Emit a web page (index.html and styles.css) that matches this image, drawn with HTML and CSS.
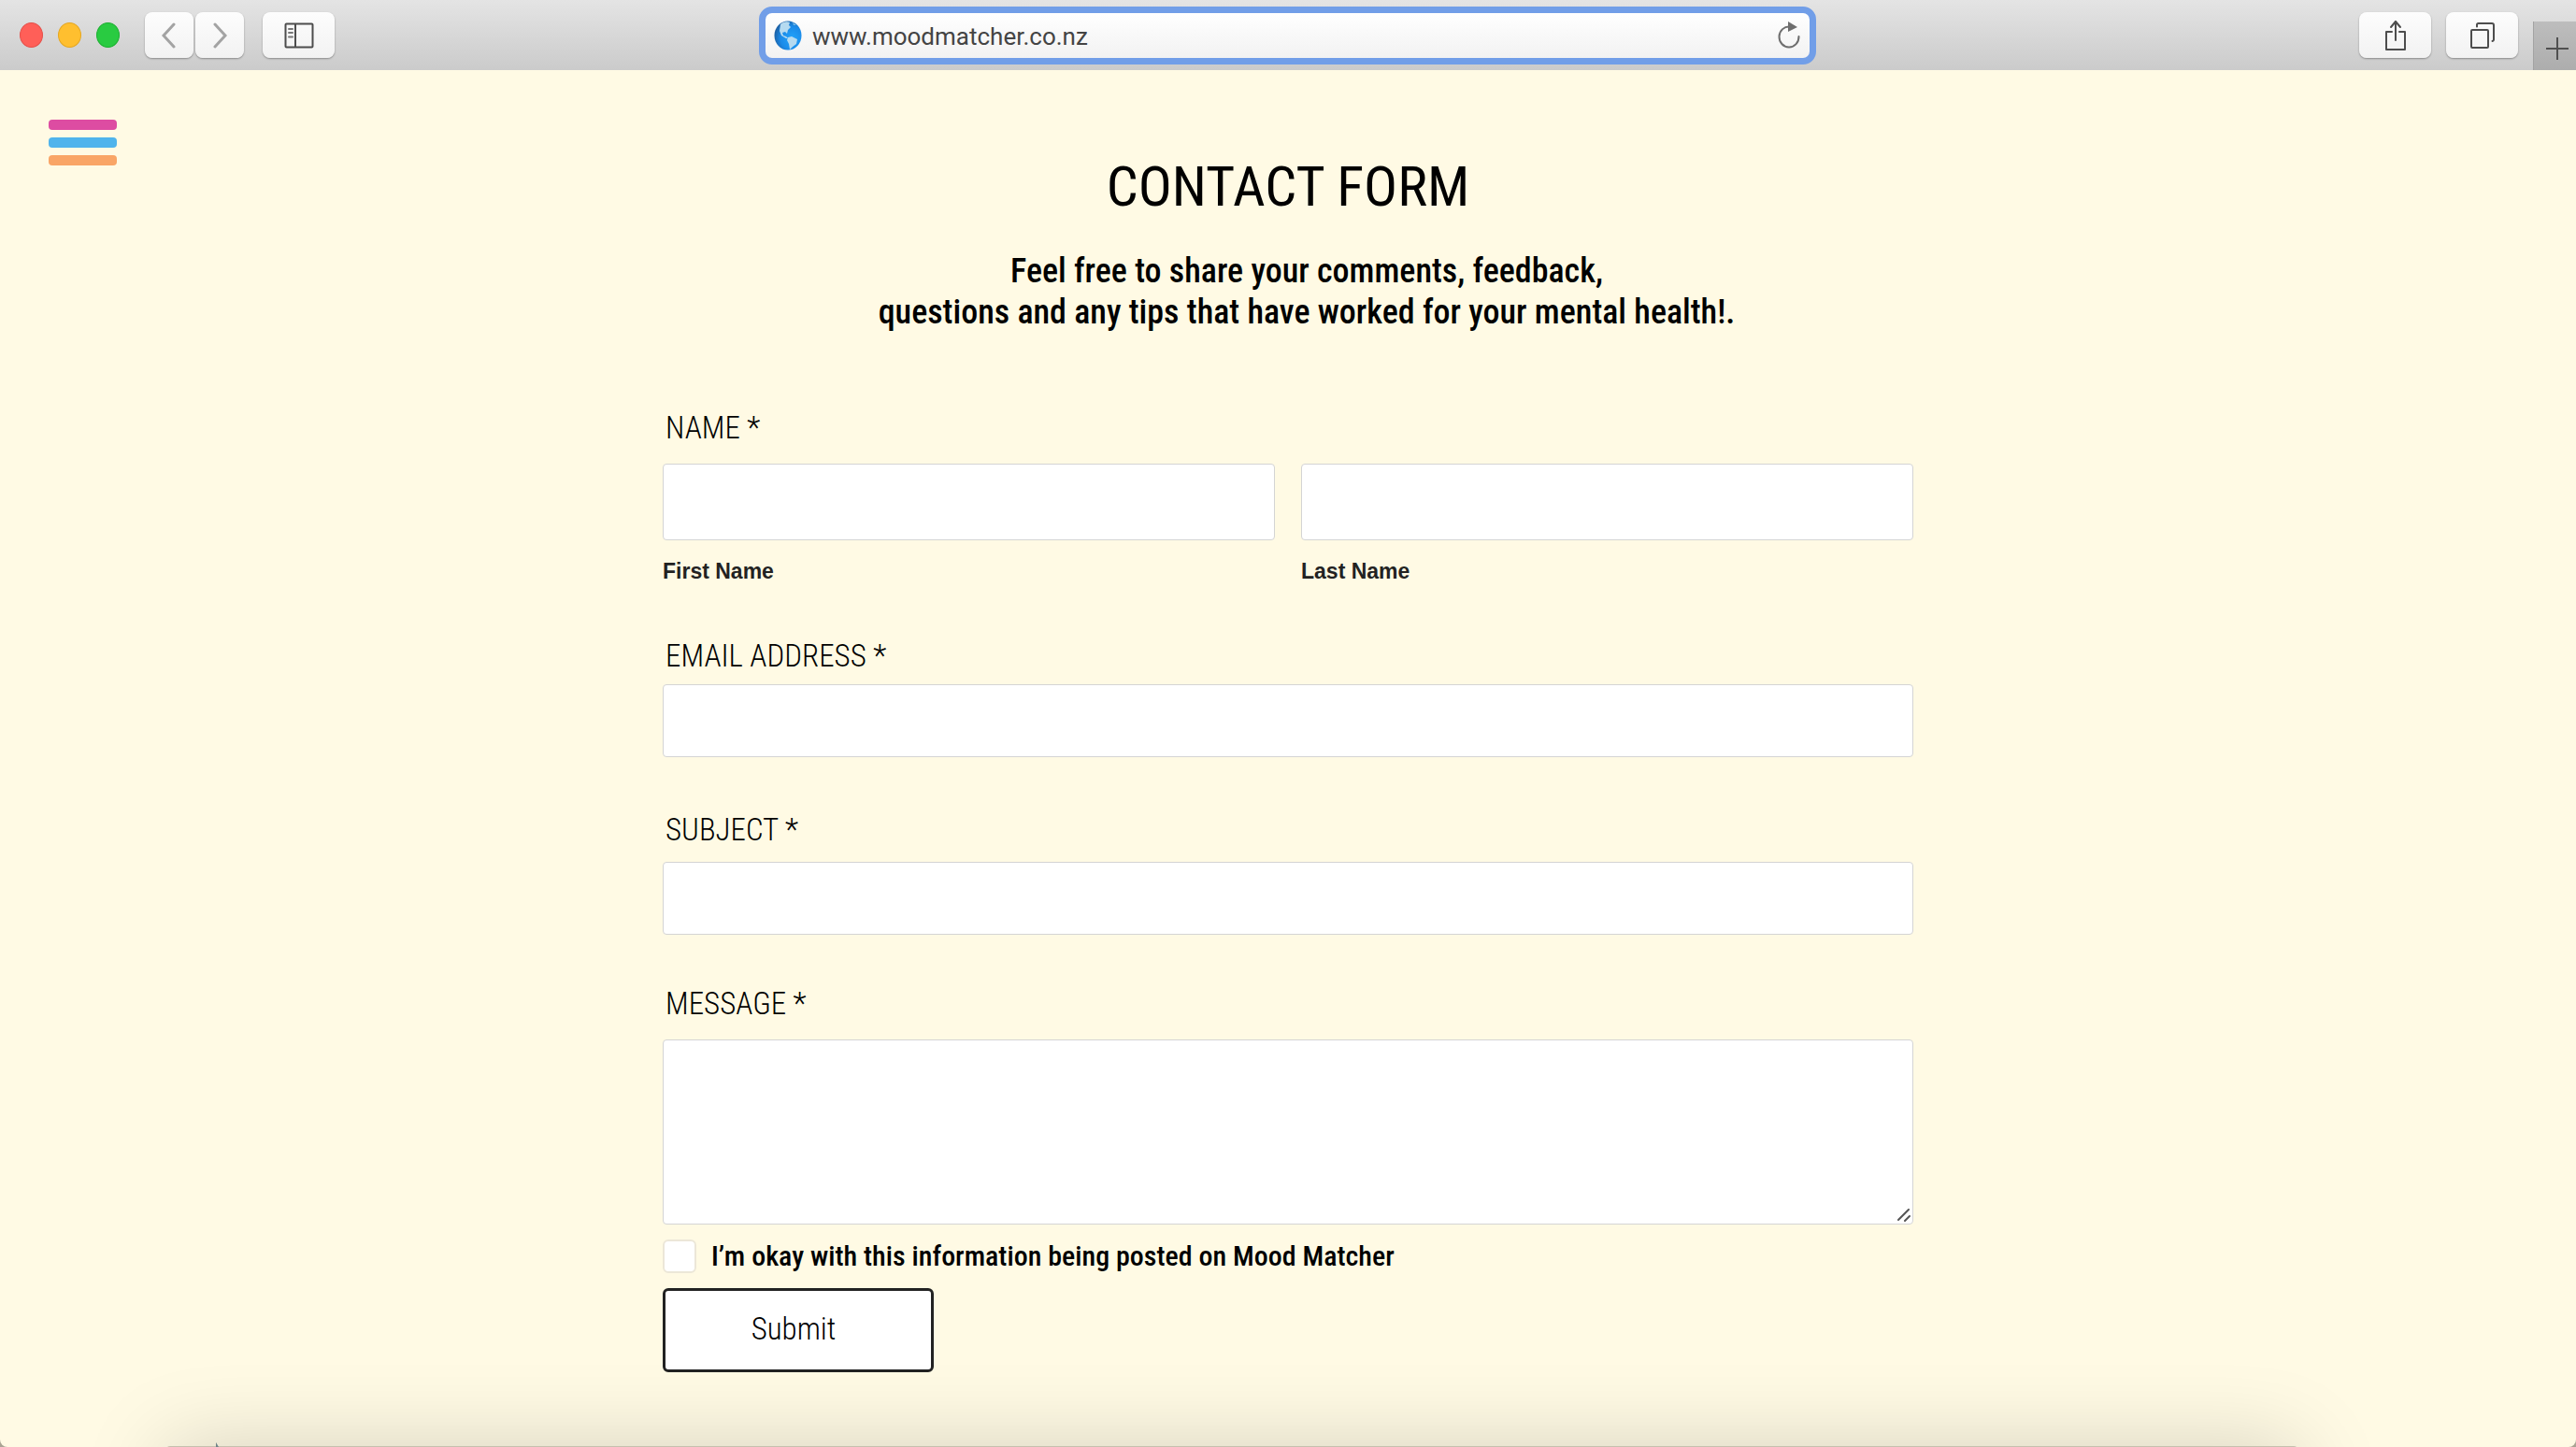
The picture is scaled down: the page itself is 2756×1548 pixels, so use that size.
FILE: index.html
```
<!DOCTYPE html>
<html lang="en">
<head>
<meta charset="utf-8">
<meta name="viewport" content="width=device-width, initial-scale=1">
<title>Mood Matcher – Contact Form</title>
<link rel="stylesheet" href="styles.css">
</head>
<body>
<div class="window">
  <header class="toolbar">
    <div class="toolbar-left">
      <div class="lights">
        <span class="light light-close"></span>
        <span class="light light-minimise"></span>
        <span class="light light-zoom"></span>
      </div>
      <div class="history">
        <button class="tool tool-nav" type="button" aria-label="Back">
          <svg width="16" height="28" viewBox="0 0 16 28" fill="none" stroke="#a3a3a3" stroke-width="3" stroke-linecap="round"><path d="M13 2 2 14l11 12"/></svg>
        </button>
        <button class="tool tool-nav" type="button" aria-label="Forward">
          <svg width="16" height="28" viewBox="0 0 16 28" fill="none" stroke="#a3a3a3" stroke-width="3" stroke-linecap="round"><path d="M3 2l11 12L3 26"/></svg>
        </button>
      </div>
      <button class="tool" type="button" aria-label="Show sidebar">
        <svg width="32" height="28" viewBox="0 0 32 28" fill="none" stroke="#4d4d4d" stroke-width="2"><rect x="1.500" y="1.500" width="29" height="25" rx="1"/><path d="M12 2v24"/><path d="M5 7h4M5 11h4M5 15.500h4" stroke="#777" stroke-linecap="round"/></svg>
      </button>
    </div>
    <div class="address">
      <svg width="32" height="32" viewBox="0 0 32 32">
        <defs><radialGradient id="sea" cx=".65" cy=".6" r=".7"><stop offset="0" stop-color="#22a3fb"/><stop offset=".6" stop-color="#1a8ae8"/><stop offset="1" stop-color="#1c5a9a"/></radialGradient></defs>
        <ellipse cx="16" cy="16" rx="14.500" ry="15.500" fill="url(#sea)"/>
        <path fill="#b5daf0" d="M8 4c3-3 7-3.500 10-2l-1 3 2 2-3 3-1 4-2-2-3 1 1 3 3 1 2 2-2 0-5-3-2-5z"/>
        <path fill="#b5daf0" d="M16 18l4-1 6 3-1 5-4 3-3 3-1-6-2-4z"/>
        <path fill="#78bdea" d="M21 2l4 3-3 0z"/>
      </svg>
      <input class="address-input" type="text" aria-label="Address" value="www.moodmatcher.co.nz">
      <button class="reload" type="button" aria-label="Reload page">
        <svg width="26" height="30" viewBox="0 0 26 30"><path d="M14 5.500a10.500 11 0 1 0 9.500 10.500" fill="none" stroke="#6e6e6e" stroke-width="2" stroke-linecap="round"/><path d="M12 0l10 6-10 5z" fill="#6e6e6e"/></svg>
      </button>
    </div>
    <div class="toolbar-right">
      <button class="tool" type="button" aria-label="Share">
        <svg width="24" height="34" viewBox="0 0 24 34" fill="none" stroke="#4d4d4d" stroke-width="2" stroke-linecap="round" stroke-linejoin="round"><path d="M8 13H2v19h20V13h-6M12 22V2M7 8l5-6 5 6"/></svg>
      </button>
      <button class="tool" type="button" aria-label="Show all tabs">
        <svg width="26" height="28" viewBox="0 0 26 28" fill="none" stroke="#4d4d4d" stroke-width="2" stroke-linecap="round"><rect x="1" y="8" width="18" height="19" rx="1"/><path d="M7 4.500V2.500q0-1.500 1.500-1.500H23q2 0 2 2v15.500q0 1-1.500 1.500"/></svg>
      </button>
      <button class="new-tab" type="button" aria-label="New tab">
        <svg width="24" height="24" viewBox="0 0 24 24" stroke="#505050" stroke-width="2"><path d="M0 12h24M12 0v24"/></svg>
      </button>
    </div>
  </header>

  <main class="page">
    <button class="menu" type="button" aria-label="Menu">
      <span class="bar bar-pink"></span>
      <span class="bar bar-blue"></span>
      <span class="bar bar-orange"></span>
    </button>
    <section class="contact">
      <h1 class="title">CONTACT FORM</h1>
      <p class="intro">Feel free to share your comments, feedback,<br>questions and any tips that have worked for your mental health!.</p>
      <form>
        <fieldset class="field name-field">
          <legend class="label">NAME *</legend>
          <div class="names">
            <div class="name">
              <input class="box box-tall" id="first" type="text">
              <label class="hint" for="first">First Name</label>
            </div>
            <div class="name">
              <input class="box box-tall" id="last" type="text">
              <label class="hint" for="last">Last Name</label>
            </div>
          </div>
        </fieldset>
        <div class="field">
          <label class="label" for="email">EMAIL ADDRESS *</label>
          <input class="box" id="email" type="email">
        </div>
        <div class="field subject-field">
          <label class="label" for="subject">SUBJECT *</label>
          <input class="box" id="subject" type="text">
        </div>
        <div class="field message-field">
          <label class="label" for="message">MESSAGE *</label>
          <textarea class="box message" id="message"></textarea>
          <svg class="grip" width="14" height="14" viewBox="0 0 14 14" stroke="#555" stroke-width="2" stroke-linecap="round"><path d="M1 12 12 1M8 13l5-5"/></svg>
        </div>
        <div class="consent">
          <input class="tick" id="consent" type="checkbox">
          <label class="consent-label" for="consent">I’m okay with this information being posted on Mood Matcher</label>
        </div>
        <button class="submit" type="submit">Submit</button>
      </form>
    </section>
  </main>
</div>
<div class="dock"></div>
</body>
</html>
```
FILE: styles.css
```
* {
  box-sizing: border-box;
}

body {
  margin: 0;
  background: #aaa494;
  color: #000;
  font-family: "Roboto Condensed", Roboto, "Liberation Sans", sans-serif;
}

button {
  margin: 0;
  padding: 0;
  border: 0;
  font: inherit;
  color: inherit;
}

.window {
  min-height: 100vh;
  background: #fffae4;
  border-radius: 0 0 8px 8px;
}

/* Browser toolbar */

.toolbar {
  display: grid;
  grid-template-columns: 812fr 1131fr 813fr;
  align-items: center;
  height: 75px;
  background: linear-gradient(#e4e4e4, #cbcbcb);
}

.toolbar-left {
  display: flex;
  align-items: center;
  gap: 20px;
  padding-left: 21px;
}

.lights {
  display: flex;
  gap: 16px;
  margin-right: 7px;
}

.light {
  width: 25px;
  height: 27px;
  border: 1px solid;
  border-radius: 50%;
}

.light-close {
  background: #ff5f58;
  border-color: #e5504a;
}

.light-minimise {
  background: #ffbf2f;
  border-color: #e5a722;
}

.light-zoom {
  background: #29cb41;
  border-color: #1eb032;
}

.history {
  display: flex;
  gap: 2px;
}

.tool {
  display: flex;
  align-items: center;
  justify-content: center;
  width: 77px;
  height: 49px;
  background: linear-gradient(#fdfdfd, #f2f2f2);
  border-radius: 8px;
  box-shadow: 0 1px 2px rgba(0, 0, 0, 0.35);
}

.tool-nav {
  width: 52px;
}

.address {
  display: flex;
  align-items: center;
  height: 62px;
  padding: 0 9px 0 8px;
  background: linear-gradient(#fff, #f2f2f2);
  border: 7px solid #719ee8;
  border-radius: 14px;
}

.address-input {
  flex: 1;
  min-width: 0;
  padding: 2px 10px 0;
  border: 0;
  outline: 0;
  background: none;
  color: #444;
  font: 26px/32px Roboto, "Liberation Sans", sans-serif;
}

.reload {
  display: flex;
  background: none;
}

.toolbar-right {
  display: flex;
  align-self: stretch;
  align-items: center;
  justify-content: flex-end;
  gap: 16px;
}

.new-tab {
  display: flex;
  align-items: center;
  justify-content: center;
  align-self: flex-end;
  width: 46px;
  height: 52px;
  padding: 6px 0 0 4px;
  background: linear-gradient(#bdbdbd, #adadad);
  border-left: 1px solid #a3a3a3;
}

/* Page */

.page {
  display: grid;
  grid-template-columns: 1fr minmax(0, 1338px) 1fr;
  align-items: start;
}

.menu {
  display: flex;
  flex-direction: column;
  justify-self: start;
  gap: 8px;
  margin: 53px 0 0 52px;
  background: none;
}

.bar {
  width: 73px;
  height: 11px;
  border-radius: 4px;
}

.bar-pink {
  background: #dd4ca2;
}

.bar-blue {
  background: #4fb4ec;
}

.bar-orange {
  background: #f9a566;
}

.contact {
  padding: 89px 0 80px;
}

.title {
  margin: 0;
  font-size: 60px;
  font-weight: 400;
  line-height: 72px;
  text-align: center;
}

.intro {
  margin: 32px 0 80px;
  padding-left: 40px;
  font-size: 36px;
  font-weight: 500;
  line-height: 44px;
  text-align: center;
}

.field {
  display: flex;
  flex-direction: column;
  gap: 8px;
  margin: 0 0 56px;
  padding: 0;
  border: 0;
}

.name-field {
  display: block;
}

.label {
  padding: 0 0 0 3px;
  font-size: 33px;
  font-weight: 350;
  line-height: 44px;
}

.names {
  display: grid;
  grid-template-columns: 1fr 1fr;
  gap: 28px;
  padding-top: 16px;
}

.name {
  display: flex;
  flex-direction: column;
  gap: 20px;
}

.hint {
  color: #222;
  font: bold 23px/26px "Liberation Sans", sans-serif;
}

.box {
  width: 100%;
  height: 78px;
  margin: 0;
  padding: 0 20px;
  border: 1px solid #d4d4d4;
  border-radius: 4px;
  background: #fff;
  font: inherit;
  font-size: 30px;
}

.box-tall {
  height: 82px;
}

.subject-field {
  gap: 12px;
  margin-bottom: 52px;
}

.message-field {
  position: relative;
  gap: 16px;
  margin-bottom: 16px;
}

.message {
  height: 198px;
  padding: 16px 20px;
  resize: none;
}

.grip {
  position: absolute;
  right: 3px;
  bottom: 3px;
}

.consent {
  display: flex;
  align-items: center;
  gap: 16px;
  margin-bottom: 16px;
}

.tick {
  appearance: none;
  width: 36px;
  height: 36px;
  margin: 0;
  border: 2px solid #ece7d8;
  border-radius: 6px;
  background: #fff;
}

.consent-label {
  font-size: 30px;
  font-weight: 500;
  line-height: 36px;
}

.submit {
  width: 290px;
  height: 90px;
  padding: 0 10px 4px 0;
  border: 3px solid #222;
  border-radius: 6px;
  background: #fff;
  font-size: 33px;
  font-weight: 350;
}

/* Desktop dock rising from below the window; only its edge and shadow show */

.dock {
  position: fixed;
  right: 298px;
  bottom: -199px;
  left: 178px;
  height: 200px;
  background: #c6c0ae;
  border-radius: 4px;
  box-shadow: 0 0 90px rgba(0, 0, 0, 0.17);
}

.dock::before {
  content: "";
  position: absolute;
  top: -4px;
  left: 53px;
  width: 3px;
  height: 5px;
  background: #6f8488;
  clip-path: polygon(0 0, 100% 100%, 0 100%);
}
```
